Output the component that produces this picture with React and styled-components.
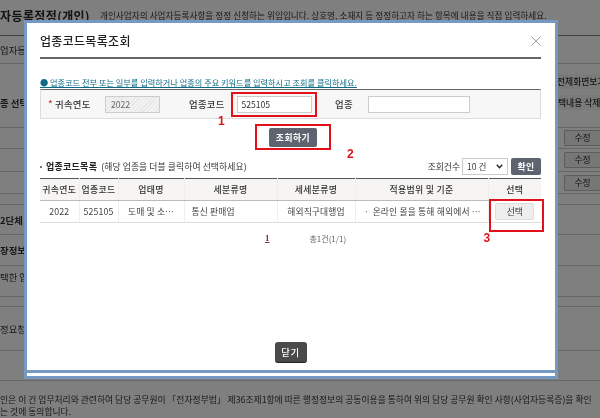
import React from 'react';
import styled, { createGlobalStyle } from 'styled-components';

const GlobalStyle = createGlobalStyle`
  html, body { margin: 0; padding: 0; background: #fff; }
  body { font-family: "Noto Sans CJK KR", "Liberation Sans", sans-serif; color: #333; }
  * { box-sizing: border-box; }
`;

const Page = styled.div`
  position: relative;
  width: 600px;
  height: 418px;
  overflow: hidden;
  background: #fff;
`;

/* page behind the dialog */
const Behind = styled.div`
  display: flex;
  flex-direction: column;
  height: 100%;
  filter: blur(0.4px);
`;

const HeadRow = styled.div`
  display: flex;
  align-items: center;
  gap: 10px;
  height: 36px;
  padding-bottom: 5px;
  border-bottom: 1px solid #888;
  white-space: nowrap;
`;

const PageTitle = styled.h1`
  margin: 0;
  font-size: 12px;
  font-weight: 700;
  letter-spacing: 0.4px;
  color: #222;
`;

const PageLead = styled.p`
  margin: 0;
  font-size: 8.6px;
  letter-spacing: 0.05px;
  color: #333;
`;

const BackRow = styled.div`
  display: flex;
  align-items: center;
  justify-content: space-between;
  height: ${p => p.$h}px;
  border-bottom: 1px solid ${p => (p.$line ? '#ccc' : 'transparent')};
  font-size: 9.4px;
  white-space: nowrap;
`;

const BackLabel = styled.span`
  font-weight: ${p => (p.$bold ? 700 : 400)};
  color: #333;
`;

const BackTab = styled.span`
  display: block;
  width: 44px;
  height: 15px;
  overflow: hidden;
  padding-left: ${p => p.$pad}px;
  background: #f4f4f4;
  font-size: 8.8px;
  font-weight: 500;
  line-height: 15px;
  color: #333;
`;

const BackAction = styled.span`
  width: 36px;
  height: 16px;
  border: 1px solid #bbb;
  border-right: 0;
  border-radius: 2px 0 0 2px;
  background: #eee;
  font-size: 8.8px;
  line-height: 14px;
  text-align: center;
`;

const BackNote = styled.p`
  margin: 0;
  margin-top: auto;
  border-top: 1px solid #ccc;
  padding-top: 13px;
  font-size: 8.8px;
  line-height: 12px;
  white-space: nowrap;
`;

const Dim = styled.div`
  position: absolute;
  inset: 0;
  background: rgba(0, 0, 0, 0.5);
`;

/* dialog */
const Modal = styled.section`
  position: absolute;
  left: 24px;
  top: 20px;
  width: 534px;
  height: 359px;
  display: flex;
  flex-direction: column;
  border: 3px solid #7699c4;
  background: #fff;
  filter: blur(0.35px);
`;

const ModalBody = styled.div`
  flex: 1;
  display: flex;
  flex-direction: column;
  padding: 0 14px 0 13px;
  border-bottom: 3px solid #7699c4;
  min-height: 0;
`;

const ModalFoot = styled.div`
  height: 3px;
  background: #fff;
`;

const ModalHead = styled.header`
  display: flex;
  align-items: center;
  justify-content: space-between;
  height: 36px;
  padding-top: 1px;
  border-bottom: 2px solid #666;
`;

const ModalTitle = styled.h2`
  margin: 0;
  font-size: 12px;
  font-weight: 500;
  letter-spacing: 0.3px;
  color: #222;
`;

const CloseIcon = styled.svg`
  width: 10px;
  height: 10px;
  stroke: #888;
  stroke-width: 0.8;
`;

const Notice = styled.p`
  margin: 17px 0 0;
  height: 13px;
  font-size: 8.2px;
  line-height: 12px;
  color: #0d6b86;
  text-decoration: underline;
  white-space: nowrap;
`;

const SearchBox = styled.div`
  display: flex;
  align-items: center;
  height: 30px;
  border: 1px solid #ddd;
  border-top: 1px solid #666;
  background: #f7f7f7;
`;

const Required = styled.span`
  margin-left: 7px;
  width: 7px;
  font-size: 10px;
  line-height: 10px;
  color: #c22;
`;

const FieldLabel = styled.label`
  font-size: 9.4px;
  font-weight: 500;
  letter-spacing: 0.3px;
  color: #333;
  width: ${p => p.$w}px;
  margin-left: ${p => p.$ml || 0}px;
  white-space: nowrap;
`;

const ReadonlyField = styled.div`
  width: 55px;
  height: 17px;
  padding-left: 5px;
  border: 1px solid #ccc;
  background: repeating-linear-gradient(135deg, #e6e6e6 0 1px, #f2f2f2 1px 3px);
  font-size: 8.6px;
  line-height: 15px;
  color: #666;
`;

const TextField = styled.div`
  width: ${p => p.$w}px;
  height: 17px;
  margin-left: ${p => p.$ml || 0}px;
  padding-left: 4px;
  border: 1px solid #ccc;
  background: #fff;
  font-size: 8.6px;
  line-height: 15px;
  color: #333;
`;

const RedFrame = styled.div`
  position: relative;
  display: flex;
  align-items: center;
  justify-content: center;
  flex: none;
  border: 2px solid #e3101a;
  width: ${p => p.$w}px;
  height: ${p => p.$h}px;
`;

const StepMark = styled.span`
  position: absolute;
  left: ${p => p.$x}px;
  top: ${p => p.$y}px;
  font-family: "Liberation Sans", sans-serif;
  font-size: 12px;
  font-weight: 700;
  color: #d9141c;
`;

const SearchActions = styled.div`
  display: flex;
  justify-content: center;
  margin-top: 5px;
  padding-left: 5px;
`;

const DarkButton = styled.button`
  width: ${p => p.$w}px;
  height: ${p => p.$h}px;
  padding: 0;
  border: 0;
  border-radius: 2px;
  background: ${p => p.$bg || '#5d6470'};
  font-family: inherit;
  font-size: 8.8px;
  font-weight: 700;
  letter-spacing: 0.5px;
  color: #fff;
`;

const ListBar = styled.div`
  display: flex;
  align-items: center;
  height: 20px;
  margin-top: 6px;
`;

const ListTitle = styled.strong`
  font-size: 9px;
  font-weight: 700;
  letter-spacing: 0.25px;
  color: #222;
  &::before {
    content: '';
    display: inline-block;
    width: 2px;
    height: 2px;
    margin-right: 4px;
    vertical-align: middle;
    background: #777;
  }
`;

const ListHint = styled.span`
  margin-left: 4px;
  font-size: 8.8px;
  letter-spacing: 0.1px;
  color: #333;
`;

const CountLabel = styled.span`
  margin-left: auto;
  font-size: 8.8px;
  color: #333;
`;

const CountSelect = styled.div`
  display: flex;
  align-items: center;
  justify-content: space-between;
  width: 46px;
  height: 17px;
  margin: 0 3px 0 2px;
  padding: 0 4px;
  border: 1px solid #ccc;
  font-size: 8.6px;
  color: #444;
`;

const Grid = styled.table`
  width: 100%;
  margin-top: 2px;
  border-collapse: collapse;
  table-layout: fixed;
  border-top: 1px solid #555;
`;

const HeadCell = styled.th`
  height: 22px;
  padding: 0;
  border-bottom: 1px solid #bbb;
  border-left: 1px solid #eee;
  background: #f6f5f3;
  font-size: 8.9px;
  font-weight: 500;
  letter-spacing: 0.3px;
  color: #333;
  &:first-child { border-left: 0; }
`;

const BodyCell = styled.td`
  height: 22px;
  padding: ${p => (p.$left ? '0 0 0 7px' : '0')};
  border-bottom: 1px solid #ddd;
  border-left: 1px solid #eee;
  font-size: 8.8px;
  letter-spacing: 0.15px;
  text-align: ${p => (p.$left ? 'left' : 'center')};
  white-space: nowrap;
  overflow: ${p => (p.$select ? 'visible' : 'hidden')};
  color: #444;
  &:first-child { border-left: 0; }
`;

const SelectCell = styled.div`
  position: relative;
  display: flex;
  justify-content: center;
`;

const SelectFrame = styled.div`
  position: absolute;
  left: 0;
  top: -4px;
  width: 55px;
  height: 33px;
  border: 2px solid #e3101a;
`;

const LightButton = styled.button`
  width: 39px;
  height: 17px;
  padding: 0;
  border: 1px solid #ddd;
  border-radius: 2px;
  background: #eee;
  font-family: inherit;
  font-size: 8.8px;
  color: #333;
`;

const Pager = styled.div`
  display: flex;
  align-items: center;
  height: 14px;
  margin-top: 8px;
  padding-left: 225px;
`;

const PageNum = styled.a`
  font-family: "Liberation Serif", serif;
  font-size: 9px;
  font-weight: 700;
  color: #8b2a4a;
  text-decoration: underline;
`;

const PageTotal = styled.span`
  margin-left: 40px;
  font-size: 8px;
  color: #666;
`;

const ModalActions = styled.div`
  display: flex;
  justify-content: center;
  margin-top: auto;
  padding-bottom: 7px;
`;

const CloseButton = styled(DarkButton)`
  background: #4a4a4a;
  border-bottom: 1px solid #222;
  border-radius: 3px;
  font-size: 9.4px;
  font-weight: 500;
`;

const columns = [39, 39, 66, 93, 78, 133, 53];
const headers = ['귀속연도', '업종코드', '업태명', '세분류명', '세세분류명', '적용범위 및 기준', '선택'];

const App = () => (
  <Page>
    <GlobalStyle />
    <Behind>
      <HeadRow>
        <PageTitle>자등록정정(개인)</PageTitle>
        <PageLead>개인사업자의 사업자등록사항을 정정 신청하는 위임입니다. 상호명, 소재지 등 정정하고자 하는 항목에 내용을 직접 입력하세요.</PageLead>
      </HeadRow>
      <BackRow $h={28} $line><BackLabel>업자등록</BackLabel></BackRow>
      <BackRow $h={10} />
      <BackRow $h={16}><span /><BackTab $pad={1}>전체화면보기</BackTab></BackRow>
      <BackRow $h={26}><BackLabel $bold>종 선택</BackLabel><BackTab $pad={2}>택내용 삭제</BackTab></BackRow>
      <BackRow $h={12} $line />
      <BackRow $h={21} $line><span /><BackAction>수정</BackAction></BackRow>
      <BackRow $h={23} $line><span /><BackAction>수정</BackAction></BackRow>
      <BackRow $h={22} $line><span /><BackAction>수정</BackAction></BackRow>
      <BackRow $h={11} $line />
      <BackRow $h={30} $line><BackLabel $bold>2단체</BackLabel></BackRow>
      <BackRow $h={31} $line><BackLabel $bold>장정보</BackLabel></BackRow>
      <BackRow $h={22}><BackLabel>택한 업</BackLabel></BackRow>
      <BackRow $h={9} $line />
      <BackRow $h={10} $line />
      <BackRow $h={44} $line><BackLabel>정요청</BackLabel></BackRow>
      <BackNote>
        인은 이 건 업무처리와 관련하여 담당 공무원이 「전자정부법」 제36조제1항에 따른 행정정보의 공동이용을 통하여 위의 담당 공무원 확인 사항(사업자등록증)을 확인<br />
        는 것에 동의합니다.
      </BackNote>
    </Behind>
    <Dim />
    <Modal>
      <ModalBody>
        <ModalHead>
          <ModalTitle>업종코드목록조회</ModalTitle>
          <CloseIcon viewBox="0 0 10 10"><path d="M0.5 0.5L9.5 9.5M9.5 0.5L0.5 9.5" /></CloseIcon>
        </ModalHead>
        <Notice>● 업종코드 전부 또는 일부를 입력하거나 업종의 주요 키워드를 입력하시고 조회를 클릭하세요.</Notice>
        <SearchBox>
          <Required>*</Required>
          <FieldLabel $w={50}>귀속연도</FieldLabel>
          <ReadonlyField>2022</ReadonlyField>
          <FieldLabel $w={42} $ml={29}>업종코드</FieldLabel>
          <RedFrame $w={86} $h={25}>
            <TextField $w={75}>525105</TextField>
            <StepMark $x={-15} $y={20}>1</StepMark>
          </RedFrame>
          <FieldLabel $w={33} $ml={18}>업종</FieldLabel>
          <TextField $w={102}>{''}</TextField>
        </SearchBox>
        <SearchActions>
          <RedFrame $w={76} $h={26}>
            <DarkButton $w={48} $h={19}>조회하기</DarkButton>
            <StepMark $x={90} $y={21}>2</StepMark>
          </RedFrame>
        </SearchActions>
        <ListBar>
          <ListTitle>업종코드목록</ListTitle>
          <ListHint>(해당 업종을 더블 클릭하여 선택하세요)</ListHint>
          <CountLabel>조회건수</CountLabel>
          <CountSelect>10 건
            <svg width="7" height="5" viewBox="0 0 7 5"><path d="M0.8 0.8L3.5 3.8L6.2 0.8" fill="none" stroke="#222" strokeWidth="1.4" /></svg>
          </CountSelect>
          <DarkButton $w={30} $h={17}>확인</DarkButton>
        </ListBar>
        <Grid>
          <colgroup>
            {columns.map((w, i) => <col key={i} style={{ width: w }} />)}
          </colgroup>
          <thead>
            <tr>{headers.map(h => <HeadCell key={h}>{h}</HeadCell>)}</tr>
          </thead>
          <tbody>
            <tr>
              <BodyCell>2022</BodyCell>
              <BodyCell>525105</BodyCell>
              <BodyCell>도매 및 소…</BodyCell>
              <BodyCell $left>통신 판매업</BodyCell>
              <BodyCell>해외직구대행업</BodyCell>
              <BodyCell>ㆍ 온라인 몰을 통해 해외에서 …</BodyCell>
              <BodyCell $select>
                <SelectCell>
                  <LightButton>선택</LightButton>
                  <SelectFrame><StepMark $x={-7} $y={30}>3</StepMark></SelectFrame>
                </SelectCell>
              </BodyCell>
            </tr>
          </tbody>
        </Grid>
        <Pager>
          <PageNum>1</PageNum>
          <PageTotal>총1건(1/1)</PageTotal>
        </Pager>
        <ModalActions>
          <CloseButton $w={32} $h={21}>닫기</CloseButton>
        </ModalActions>
      </ModalBody>
      <ModalFoot />
    </Modal>
  </Page>
);

export default App;
